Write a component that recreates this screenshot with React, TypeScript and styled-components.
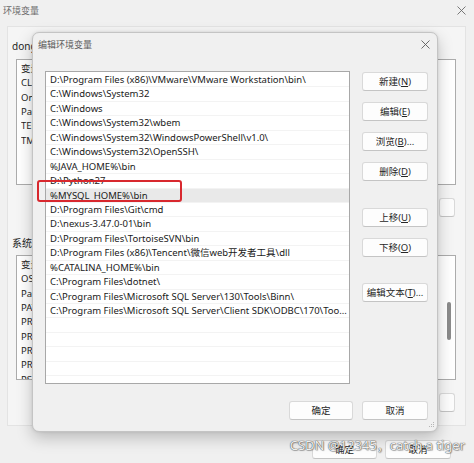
import React from "react";
import styled, { createGlobalStyle } from "styled-components";

const GlobalStyle = createGlobalStyle`
  html, body { margin: 0; padding: 0; }
  body {
    width: 474px;
    height: 463px;
    overflow: hidden;
    background: #efefef;
    font-family: "Noto Sans", "Noto Sans CJK SC", sans-serif;
  }
`;

const Window = styled.div`
  position: relative;
  width: 474px;
  height: 463px;
  background: #f0f0f0;
  display: flex;
  flex-direction: column;
  overflow: hidden;
`;

const WinTitle = styled.div`
  height: 20px;
  display: flex;
  align-items: center;
  justify-content: space-between;
  padding: 0 8px 0 3px;
  font-size: 9px;
  color: #6b6b6b;
`;

const Panel = styled.div`
  margin: 6px 8px 0 7px;
  border: 1px solid #e3e3e3;
  background: #f5f5f5;
  padding: 12px 9px 13px 4px;
  display: flex;
  flex-direction: column;
`;

const SectionLabel = styled.div<{ $top: number }>`
  margin-top: ${(p) => p.$top}px;
  height: 14px;
  line-height: 14px;
  font-size: 10px;
  color: #1f1f1f;
  white-space: nowrap;
`;

const BgList = styled.div<{ $h: number; $top: number }>`
  position: relative;
  margin: ${(p) => p.$top}px 0 0 4px;
  height: ${(p) => p.$h}px;
  box-sizing: border-box;
  border: 1px solid #acacac;
  background: #fff;
  padding-top: 2px;
  overflow: hidden;
`;

const BgRow = styled.div`
  display: flex;
  height: 14.35px;
  line-height: 14.35px;
  font-size: 9.5px;
  color: #1f1f1f;
  padding-left: 4px;
  white-space: nowrap;
`;

const BgCell = styled.span<{ $w: number }>`
  width: ${(p) => p.$w}px;
  overflow: hidden;
`;

const ScrollThumb = styled.div`
  position: absolute;
  right: 4px;
  top: 46px;
  width: 4px;
  height: 38px;
  border-radius: 2px;
  background: #8b8b8b;
`;

const ButtonRow = styled.div<{ $top: number }>`
  margin-top: ${(p) => p.$top}px;
  display: flex;
  justify-content: flex-end;
  gap: 9px;
  padding-right: 1px;
`;

const Btn = styled.button<{ $w: number }>`
  width: ${(p) => p.$w}px;
  height: 19px;
  box-sizing: border-box;
  padding: 0;
  background: #fdfdfd;
  border: 1px solid #d9d9d9;
  border-bottom-color: #c4c4c4;
  border-radius: 3px;
  font-family: inherit;
  font-size: 9.5px;
  line-height: 17px;
  color: #262626;
  white-space: nowrap;
  flex: none;
`;

const WinFooter = styled.div`
  margin-top: 14px;
  display: flex;
  justify-content: flex-end;
  gap: 8px;
  padding-right: 23px;
`;

const Dialog = styled.div`
  position: absolute;
  left: 32px;
  top: 32px;
  width: 406px;
  height: 400px;
  box-sizing: border-box;
  border: 1px solid #c4c4c4;
  border-radius: 7px;
  background: #f0f0f0;
  box-shadow: 0 6px 16px rgba(0, 0, 0, 0.22), 0 0 3px rgba(0, 0, 0, 0.1);
  display: flex;
  flex-direction: column;
`;

const DlgTitle = styled.div`
  height: 23px;
  display: flex;
  align-items: center;
  justify-content: space-between;
  padding: 0 7px 0 5px;
  font-size: 9px;
  color: #5c5c5c;
`;

const DlgBody = styled.div`
  display: flex;
  gap: 12px;
  padding: 15px 9px 0 12px;
`;

const PathList = styled.div`
  width: 305px;
  height: 313px;
  box-sizing: border-box;
  border: 1px solid #a8a8a8;
  background: #fff;
  padding-top: 1px;
  overflow: hidden;
  flex: none;
`;

const PathRow = styled.div<{ $sel?: boolean }>`
  height: 14.45px;
  line-height: 14.45px;
  padding-left: 4px;
  font-size: 9.5px;
  color: #1a1a1a;
  white-space: nowrap;
  overflow: hidden;
  background: ${(p) => (p.$sel ? "#e9e9e9" : "#fff")};
  box-shadow: inset 0 -1px 0 #f3f3f3;
`;

const BtnColumn = styled.div`
  display: flex;
  flex-direction: column;
  gap: 11px;
  padding-top: 1px;
`;

const ColBtn = styled(Btn)<{ $extra?: number }>`
  margin-top: ${(p) => p.$extra || 0}px;
`;

const DlgFooter = styled.div`
  margin-top: 17px;
  display: flex;
  justify-content: flex-end;
  gap: 9px;
  padding-right: 9px;
`;

const Highlight = styled.div`
  position: absolute;
  left: 4px;
  top: 147px;
  width: 145px;
  height: 22px;
  box-sizing: border-box;
  border: 2px solid #d8282e;
  border-radius: 3px;
`;

const Grip = styled.svg`
  position: absolute;
  right: 2px;
  bottom: 2px;
`;

const Watermark = styled.div`
  position: absolute;
  right: 9px;
  top: 434px;
  line-height: 22px;
  font-size: 13px;
  color: rgba(255, 255, 255, 0.92);
  text-shadow: 0 0 1px #4a4a4a, 0 0 1px #4a4a4a, 1px 1px 1px rgba(0, 0, 0, 0.25);
  white-space: nowrap;
  pointer-events: none;
`;

const CloseIcon = ({ color }: { color: string }) => (
  <svg width="9" height="9" viewBox="0 0 9 9">
    <path d="M0.5 0.5 L8.5 8.5 M8.5 0.5 L0.5 8.5" stroke={color} strokeWidth="0.9" fill="none" />
  </svg>
);

const userVars = [
  ["变量", "值"],
  ["CLASSPATH", ".;%JAVA_HOME%\\lib"],
  ["OneDrive", "C:\\Users\\dong\\OneDrive"],
  ["Path", "C:\\Users\\dong\\AppData\\Local\\Microsoft\\WindowsApps;"],
  ["TEMP", "C:\\Users\\dong\\AppData\\Local\\Temp"],
  ["TMP", "C:\\Users\\dong\\AppData\\Local\\Temp"],
];

const sysVars = [
  ["变量", "值"],
  ["OS", "Windows_NT"],
  ["Path", "D:\\Program Files (x86)\\VMware\\VMware Workstation\\bin\\;"],
  ["PATHEXT", ".COM;.EXE;.BAT;.CMD;.VBS;.VBE;.JS;.JSE;.WSF"],
  ["PROCESSOR_ARCHITECTURE", "AMD64"],
  ["PROCESSOR_IDENTIFIER", "Intel64 Family 6"],
  ["PROCESSOR_LEVEL", "6"],
  ["PROCESSOR_REVISION", "8c01"],
  ["PSModulePath", "%ProgramFiles%\\WindowsPowerShell"],
];

const paths = [
  "D:\\Program Files (x86)\\VMware\\VMware Workstation\\bin\\",
  "C:\\Windows\\System32",
  "C:\\Windows",
  "C:\\Windows\\System32\\wbem",
  "C:\\Windows\\System32\\WindowsPowerShell\\v1.0\\",
  "C:\\Windows\\System32\\OpenSSH\\",
  "%JAVA_HOME%\\bin",
  "D:\\Python27",
  "%MYSQL_HOME%\\bin",
  "D:\\Program Files\\Git\\cmd",
  "D:\\nexus-3.47.0-01\\bin",
  "D:\\Program Files\\TortoiseSVN\\bin",
  "D:\\Program Files (x86)\\Tencent\\微信web开发者工具\\dll",
  "%CATALINA_HOME%\\bin",
  "C:\\Program Files\\dotnet\\",
  "C:\\Program Files\\Microsoft SQL Server\\130\\Tools\\Binn\\",
  "C:\\Program Files\\Microsoft SQL Server\\Client SDK\\ODBC\\170\\Too...",
];

const rows = [...paths, ...Array(6).fill("")];

const Mn = ({ label, k, tail }: { label: string; k: string; tail?: string }) => (
  <>
    {label}(<u>{k}</u>){tail || ""}
  </>
);

export default function App() {
  return (
    <>
      <GlobalStyle />
      <Window>
        <WinTitle>
          <span>环境变量</span>
          <CloseIcon color="#6a6a6a" />
        </WinTitle>
        <Panel>
          <SectionLabel $top={0}>dong 的用户变量(U)</SectionLabel>
          <BgList $h={126} $top={6}>
            {userVars.map(([n, v], i) => (
              <BgRow key={i}>
                <BgCell $w={150}>{n}</BgCell>
                <BgCell $w={280}>{v}</BgCell>
              </BgRow>
            ))}
          </BgList>
          <ButtonRow $top={13}>
            <Btn $w={66}><Mn label="新建" k="N" tail="..." /></Btn>
            <Btn $w={66}><Mn label="编辑" k="E" tail="..." /></Btn>
            <Btn $w={16}></Btn>
          </ButtonRow>
          <SectionLabel $top={19}>系统变量(S)</SectionLabel>
          <BgList $h={125} $top={5}>
            {sysVars.map(([n, v], i) => (
              <BgRow key={i}>
                <BgCell $w={150}>{n}</BgCell>
                <BgCell $w={280}>{v}</BgCell>
              </BgRow>
            ))}
            <ScrollThumb />
          </BgList>
          <ButtonRow $top={13}>
            <Btn $w={66}><Mn label="新建" k="W" tail="..." /></Btn>
            <Btn $w={66}><Mn label="编辑" k="I" tail="..." /></Btn>
            <Btn $w={16}></Btn>
          </ButtonRow>
        </Panel>
        <WinFooter>
          <Btn $w={65}>确定</Btn>
          <Btn $w={66}>取消</Btn>
        </WinFooter>

        <Dialog>
          <DlgTitle>
            <span>编辑环境变量</span>
            <CloseIcon color="#5a5a5a" />
          </DlgTitle>
          <DlgBody>
            <PathList>
              {rows.map((p, i) => (
                <PathRow key={i} $sel={i === 8}>{p}</PathRow>
              ))}
            </PathList>
            <BtnColumn>
              <ColBtn $w={66}><Mn label="新建" k="N" /></ColBtn>
              <ColBtn $w={66}><Mn label="编辑" k="E" /></ColBtn>
              <ColBtn $w={66}><Mn label="浏览" k="B" tail="..." /></ColBtn>
              <ColBtn $w={66}><Mn label="删除" k="D" /></ColBtn>
              <ColBtn $w={66} $extra={16}><Mn label="上移" k="U" /></ColBtn>
              <ColBtn $w={66}><Mn label="下移" k="O" /></ColBtn>
              <ColBtn $w={66} $extra={15}><Mn label="编辑文本" k="T" tail="..." /></ColBtn>
            </BtnColumn>
          </DlgBody>
          <DlgFooter>
            <Btn $w={64}>确定</Btn>
            <Btn $w={66}>取消</Btn>
          </DlgFooter>
          <Highlight />
          <Grip width="7" height="7" viewBox="0 0 7 7">
            <g fill="#b5b5b5">
              <rect x="5" y="0" width="1" height="1" />
              <rect x="3" y="2" width="1" height="1" />
              <rect x="5" y="2" width="1" height="1" />
              <rect x="1" y="4" width="1" height="1" />
              <rect x="3" y="4" width="1" height="1" />
              <rect x="5" y="4" width="1" height="1" />
            </g>
          </Grip>
        </Dialog>
        <Watermark>CSDN @12345，catch a tiger</Watermark>
      </Window>
    </>
  );
}
